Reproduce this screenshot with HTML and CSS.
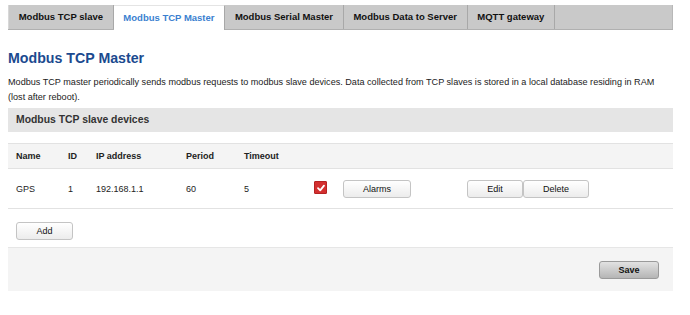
FILE: index.html
```html
<!DOCTYPE html>
<html lang="en">
<head>
    <meta charset="UTF-8">
    <title>Modbus TCP Master</title>
    <link rel="stylesheet" href="styles.css">
</head>
<body>

    <div class="page">
        <ul class="tabs">
            <li class="tab">Modbus TCP slave</li>
            <li class="tab active">Modbus TCP Master</li>
            <li class="tab">Modbus Serial Master</li>
            <li class="tab">Modbus Data to Server</li>
            <li class="tab">MQTT gateway</li>
            <li class="tab-fill"></li>
        </ul>

        <h2 class="title">Modbus TCP Master</h2>
        <p class="desc">Modbus TCP master periodically sends modbus requests to modbus slave devices. Data collected from TCP slaves is stored in a local database residing in RAM (lost after reboot).</p>

        <div class="section-head">Modbus TCP slave devices</div>

        <table class="devices">
            <colgroup>
                <col style="width:52px">
                <col style="width:28px">
                <col style="width:90px">
                <col style="width:58px">
                <col style="width:70px">
                <col style="width:29px">
                <col style="width:124px">
                <col>
            </colgroup>
            <thead>
                <tr>
                    <th>Name</th>
                    <th>ID</th>
                    <th>IP address</th>
                    <th>Period</th>
                    <th>Timeout</th>
                    <th></th>
                    <th></th>
                    <th></th>
                </tr>
            </thead>
            <tbody>
                <tr>
                    <td>GPS</td>
                    <td>1</td>
                    <td>192.168.1.1</td>
                    <td>60</td>
                    <td>5</td>
                    <td><span class="check"><svg width="10" height="10" viewBox="0 0 10 10"><path d="M2 5.2 L4.2 7.4 L8 2.6" fill="none" stroke="#fff" stroke-width="1.8" stroke-linecap="round" stroke-linejoin="round"/></svg></span></td>
                    <td><button class="btn btn-alarms">Alarms</button></td>
                    <td class="actions"><button class="btn btn-edit">Edit</button><button class="btn btn-delete">Delete</button></td>
                </tr>
            </tbody>
        </table>

        <div class="add-row">
            <button class="btn btn-add">Add</button>
        </div>

        <div class="footer">
            <button class="btn btn-save">Save</button>
        </div>
    </div>

</body>
</html>
```

FILE: styles.css
```css
body {
    margin: 0;
    font-family: "Liberation Sans", Arial, Helvetica, sans-serif;
    font-size: 9px;
    color: #222;
    background: #fff;
}
.page {
    width: 665px;
    padding: 5px 8px 0 8px;
}
.tabs {
    list-style: none;
    margin: 0;
    padding: 0;
    display: flex;
    height: 25px;
    background: #c9c9c9;
    border-bottom: 1px solid #b0b0b0;
    box-sizing: border-box;
}
.tab {
    padding: 0 9.7px;
    line-height: 24px;
    font-size: 9.5px;
    font-weight: bold;
    color: #111;
    border-right: 1px solid #a8a8a8;
    white-space: nowrap;
}
.tab:first-child {
    border-left: 1px solid #d8d8d8;
}
.tab.active {
    background: #fff;
    color: #3b7fd0;
    height: 25px;
    border-top: 1px solid #e4e4e4;
    line-height: 23px;
    box-sizing: border-box;
}
.tab-fill {
    flex: 1;
    border-right: 1px solid #b8b8b8;
}
.title {
    margin: 19px 0 0 0;
    font-size: 14.2px;
    line-height: 18px;
    font-weight: bold;
    color: #1b4a8f;
}
.desc {
    margin: 8px 0 0 0;
    font-size: 9.1px;
    line-height: 15px;
    color: #222;
}
.section-head {
    margin-top: 3px;
    height: 24px;
    line-height: 24px;
    padding-left: 8px;
    background: #e5e5e5;
    font-size: 10.4px;
    font-weight: bold;
    color: #333;
}
.devices {
    margin-top: 11px;
    width: 100%;
    table-layout: fixed;
    border-collapse: collapse;
}
.devices th,
.devices td {
    padding: 0 0 0 8px;
    text-align: left;
    white-space: nowrap;
}
.devices thead tr {
    background: #f4f4f4;
    border-top: 1px solid #e2e2e2;
    border-bottom: 1px solid #e2e2e2;
}
.devices th {
    height: 24px;
    font-weight: bold;
    color: #222;
}
.devices tbody tr {
    border-bottom: 1px solid #e2e2e2;
}
.devices td {
    height: 39px;
}
.check {
    display: inline-block;
    width: 11px;
    height: 11px;
    background: #d32f2f;
    border: 1px solid #b52222;
    border-radius: 1px;
    vertical-align: middle;
    position: relative;
    top: -1px;
}
.check svg {
    display: block;
    margin: 0.5px;
}
.btn {
    font-family: "Liberation Sans", Arial, Helvetica, sans-serif;
    font-size: 9px;
    color: #111;
    height: 18px;
    padding: 0;
    background: linear-gradient(#ffffff, #ececec);
    border: 1px solid #c4c4c4;
    border-radius: 3px;
    vertical-align: middle;
}
.btn-alarms {
    width: 68px;
}
.actions {
    padding-left: 8px;
}
.btn-edit {
    width: 56px;
}
.btn-delete {
    width: 66px;
}
.add-row {
    padding: 13px 0 7px 8px;
    border-bottom: 1px solid #e6e6e6;
}
.add-row .btn {
    display: block;
}
.btn-add {
    width: 57px;
}
.footer {
    height: 43px;
    background: #f4f4f4;
    display: flex;
    justify-content: flex-end;
    align-items: center;
    padding-right: 14px;
}
.btn-save {
    width: 60px;
    height: 18px;
    font-weight: bold;
    background: linear-gradient(#e2e2e2, #b5b5b5);
    border: 1px solid #9a9a9a;
}
```
